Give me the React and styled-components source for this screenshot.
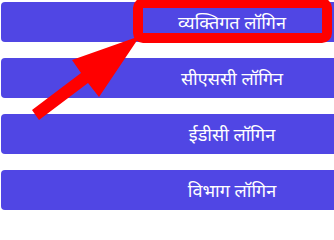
import React from 'react';
import styled, { createGlobalStyle } from 'styled-components';

const GlobalStyle = createGlobalStyle`
  html, body {
    margin: 0;
    padding: 0;
    background: #ffffff;
    overflow: hidden;
  }
  body {
    font-family: "Noto Sans", "Liberation Sans", sans-serif;
  }
`;

const Page = styled.div`
  position: relative;
  width: 334px;
  overflow-x: hidden;
  overflow-y: visible;
`;

const LoginList = styled.div`
  display: flex;
  flex-direction: column;
  gap: 16px;
  padding: 2px 0 0 1px;
`;

const LoginButton = styled.button`
  flex-shrink: 0;
  width: 462px;
  height: 40px;
  border: none;
  border-radius: 4px;
  background: #5046e4;
  color: #ffffff;
  font-family: "Noto Sans", "Liberation Sans", sans-serif;
  font-size: 18px;
  display: flex;
  align-items: center;
  justify-content: center;
  cursor: pointer;
  padding: 0;
`;

const Annotation = styled.svg`
  position: absolute;
  left: 0;
  top: 0;
  width: 334px;
  height: 204px;
  pointer-events: none;
`;

const logins = ['व्यक्तिगत लॉगिन', 'सीएससी लॉगिन', 'ईडीसी लॉगिन', 'विभाग लॉगिन'];

const App = () => {
  return (
    <Page>
      <GlobalStyle />
      <LoginList>
        {logins.map((label) => (
          <LoginButton key={label}>{label}</LoginButton>
        ))}
      </LoginList>

      {/* red highlight box + arrow drawn over the first button */}
      <Annotation viewBox="0 0 334 204">
        <rect
          x="138"
          y="3"
          width="189"
          height="35"
          rx="5"
          fill="none"
          stroke="#ff0000"
          strokeWidth="10"
          strokeLinejoin="round"
        />
        <polygon
          points="140,36 99,97 88,83 39,120 32,110 81,73 72,60"
          fill="#ff0000"
        />
      </Annotation>
    </Page>
  );
};

export default App;
